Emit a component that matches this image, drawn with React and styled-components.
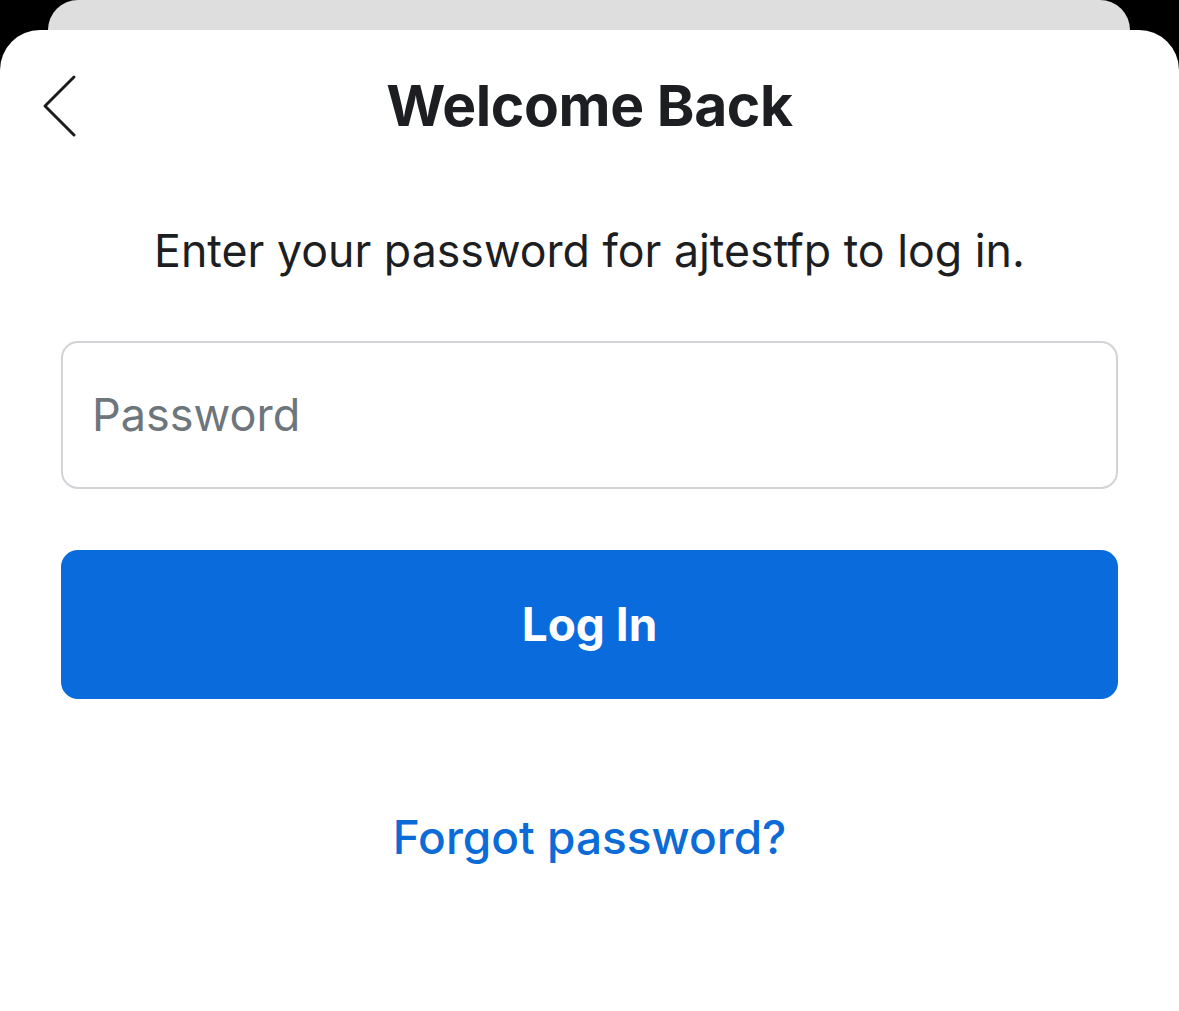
import styled, { createGlobalStyle } from 'styled-components'

const Global = createGlobalStyle`
    html, body {
        margin: 0;
        padding: 0;
        background: #000;
        font-family: Inter, "Noto Sans", sans-serif;
    }
`

const App = () => {
    return (
        <>
            <Global />
            <Screen>
                <BackCard />
                <Sheet>
                    <Header>
                        <BackButton aria-label="Back">
                            <svg width="36" height="64" viewBox="0 0 36 64" fill="none">
                                <path d="M32 3 L3 32 L32 61" stroke="#1c1c1e" strokeWidth="3" strokeLinecap="round" strokeLinejoin="round" />
                            </svg>
                        </BackButton>
                        <Title>Welcome Back</Title>
                    </Header>
                    <Subtitle>Enter your password for ajtestfp to log in.</Subtitle>
                    <Form>
                        <PasswordInput type="password" placeholder="Password" />
                        <LoginButton>Log In</LoginButton>
                    </Form>
                    <ForgotLink>Forgot password?</ForgotLink>
                </Sheet>
            </Screen>
        </>
    )
}

const Screen = styled.div`
    display: flex;
    flex-direction: column;
    min-height: 1011px;
    background: #000;
    overflow: hidden;
`

const BackCard = styled.div`
    flex: none;
    height: 30px;
    margin: 0 49px 0 48px;
    background: #dedede;
    border-radius: 30px 30px 0 0;
`

const Sheet = styled.div`
    position: relative;
    flex: 1;
    background: #fff;
    border-radius: 40px 40px 0 0;
    display: flex;
    flex-direction: column;
    align-items: center;
    padding: 0 61px;
`

const Header = styled.div`
    position: relative;
    width: 100%;
    height: 150px;
    display: flex;
    align-items: center;
    justify-content: center;
`

const BackButton = styled.button`
    position: absolute;
    left: -19px;
    top: 44px;
    border: none;
    background: none;
    padding: 0;
    display: flex;
`

const Title = styled.h1`
    margin: 0;
    margin-top: 1px;
    font-size: 57px;
    font-weight: 700;
    color: #1c1e21;
    letter-spacing: -0.4px;
`

const Subtitle = styled.p`
    margin: 45px 0 0;
    font-size: 44.7px;
    line-height: 1.2;
    color: #1c1e21;
    text-align: center;
`

const Form = styled.div`
    width: 100%;
    margin-top: 62px;
    display: flex;
    flex-direction: column;
    gap: 61px;
`

const PasswordInput = styled.input`
    box-sizing: border-box;
    width: 100%;
    height: 148px;
    border: 2px solid #d2d3d7;
    border-radius: 17px;
    padding: 0 29px;
    font-family: inherit;
    font-size: 45px;
    color: #1c1e21;
    outline: none;

    &::placeholder {
        color: #6d757d;
    }
`

const LoginButton = styled.button`
    width: 100%;
    height: 149px;
    border: none;
    border-radius: 17px;
    background: #0a6bdd;
    color: #fff;
    font-family: inherit;
    font-size: 46px;
    font-weight: 700;
`

const ForgotLink = styled.a`
    margin-top: 110px;
    font-size: 46px;
    font-weight: 500;
    color: #0b6bd7;
    cursor: pointer;
`

export default App
